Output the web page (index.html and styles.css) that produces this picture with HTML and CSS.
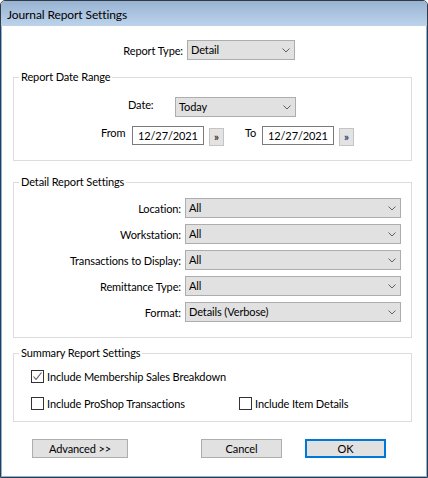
FILE: index.html
```html
<!DOCTYPE html>
<html>
<head>
<meta charset="utf-8">
<title>Journal Report Settings</title>
<link rel="stylesheet" href="styles.css">
</head>
<body>
<div class="window">
  <div class="titlebar"><span class="title">Journal Report Settings</span></div>
  <div class="client">
    <div class="type-row">
      <span class="type-label">Report Type:</span>
      <div class="combo combo-type"><span class="combo-text">Detail</span><svg class="chev" width="8" height="5" viewBox="0 0 8 5"><polyline points="0.5,0.5 4,4 7.5,0.5"/></svg></div>
    </div>

    <fieldset class="group group-date">
      <legend>Report Date Range</legend>
      <div class="date-row">
        <span class="date-label">Date:</span>
        <div class="combo combo-date"><span class="combo-text">Today</span><svg class="chev" width="8" height="5" viewBox="0 0 8 5"><polyline points="0.5,0.5 4,4 7.5,0.5"/></svg></div>
      </div>
      <div class="range-row">
        <span class="from-label">From</span>
        <div class="textbox">12/27/2021</div>
        <div class="pick">&raquo;</div>
        <span class="to-label">To</span>
        <div class="textbox">12/27/2021</div>
        <div class="pick pick-blue">&raquo;</div>
      </div>
    </fieldset>

    <fieldset class="group group-detail">
      <legend>Detail Report Settings</legend>
      <div class="detail-grid">
        <span class="field-label">Location:</span>
        <div class="combo combo-wide"><span class="combo-text">All</span><svg class="chev" width="8" height="5" viewBox="0 0 8 5"><polyline points="0.5,0.5 4,4 7.5,0.5"/></svg></div>
        <span class="field-label">Workstation:</span>
        <div class="combo combo-wide"><span class="combo-text">All</span><svg class="chev" width="8" height="5" viewBox="0 0 8 5"><polyline points="0.5,0.5 4,4 7.5,0.5"/></svg></div>
        <span class="field-label">Transactions to Display:</span>
        <div class="combo combo-wide"><span class="combo-text">All</span><svg class="chev" width="8" height="5" viewBox="0 0 8 5"><polyline points="0.5,0.5 4,4 7.5,0.5"/></svg></div>
        <span class="field-label">Remittance Type:</span>
        <div class="combo combo-wide"><span class="combo-text">All</span><svg class="chev" width="8" height="5" viewBox="0 0 8 5"><polyline points="0.5,0.5 4,4 7.5,0.5"/></svg></div>
        <span class="field-label">Format:</span>
        <div class="combo combo-wide"><span class="combo-text">Details (Verbose)</span><svg class="chev" width="8" height="5" viewBox="0 0 8 5"><polyline points="0.5,0.5 4,4 7.5,0.5"/></svg></div>
      </div>
    </fieldset>

    <fieldset class="group group-summary">
      <legend>Summary Report Settings</legend>
      <div class="check-row first">
        <label class="check"><span class="box"><svg width="11" height="11" viewBox="0 0 11 11"><polyline points="1.5,5.5 4,8.5 9.5,1.5"/></svg></span><span>Include Membership Sales Breakdown</span></label>
      </div>
      <div class="check-row second">
        <label class="check"><span class="box"></span><span>Include ProShop Transactions</span></label>
        <label class="check"><span class="box"></span><span>Include Item Details</span></label>
      </div>
    </fieldset>

    <div class="button-row">
      <div class="btn btn-adv">Advanced &gt;&gt;</div>
      <div class="btn btn-cancel">Cancel</div>
      <div class="btn btn-ok">OK</div>
    </div>
  </div>
</div>
</body>
</html>
```
FILE: styles.css
```css
html, body {
  margin: 0;
  padding: 0;
  background: #ffffff;
}
body {
  font-family: Lato, "Liberation Sans", sans-serif;
  font-size: 11px;
  letter-spacing: -0.12px;
  color: #000;
}
.window {
  width: 428px;
  height: 478px;
  box-sizing: border-box;
  border: 1px solid #333a44;
  border-radius: 5px 5px 0 0;
  overflow: hidden;
  display: flex;
  flex-direction: column;
  background: #fff;
}
.titlebar {
  height: 25px;
  flex: none;
  background: linear-gradient(#98b3d3, #bcd3eb);
  box-sizing: border-box;
  padding: 6px 0 0 6px;
  font-size: 12px;
  line-height: 15px;
  letter-spacing: -0.1px;
}
.client {
  flex: 1;
  border: 1px solid #7fb6e6;
  border-top: none;
  padding: 0 0 0 11px;
  display: flex;
  flex-direction: column;
}

/* combos */
.combo {
  height: 20px;
  box-sizing: border-box;
  background: #e1e1e1;
  border: 1px solid #adadad;
  display: flex;
  align-items: center;
  justify-content: space-between;
  padding: 0 4px 0 3px;
  line-height: 18px;
}
.chev polyline {
  fill: none;
  stroke: #606060;
  stroke-width: 1;
}

/* report type row */
.type-row {
  margin-top: 14px;
  display: flex;
  align-items: center;
  margin-left: -9px;
}
.type-label {
  width: 179px;
  text-align: right;
  margin-right: 4px;
}
.combo-type { width: 108px; }

/* groups */
.group {
  margin: 0;
  padding: 0;
  width: 399px;
  box-sizing: border-box;
  border: 1px solid #dcdcdc;
  min-width: 0;
}
.group legend {
  padding: 0 2px;
  margin-left: 5px;
  line-height: 16px;
  font-size: 11px;
}
.group-date {
  margin-top: 9px;
  height: 92px;
}
.group-detail {
  margin-top: 13px;
  height: 164px;
}
.group-summary {
  margin-top: 7px;
  height: 77px;
}

/* date range */
.date-row {
  margin-top: 12px;
  padding-left: 114px;
  display: flex;
  align-items: flex-start;
}
.date-label {
  width: 47px;
  line-height: 16px;
}
.combo-date { width: 121px; }

.range-row {
  margin-top: 9px;
  padding-left: 87px;
  display: flex;
  align-items: flex-start;
}
.from-label {
  width: 31px;
  line-height: 16px;
  margin-top: -1px;
}
.to-label {
  width: 17px;
  margin-left: 21px;
  line-height: 16px;
  margin-top: -1px;
}
.textbox {
  width: 72px;
  height: 19px;
  box-sizing: border-box;
  border: 1px solid #7a7a7a;
  padding-left: 5px;
  line-height: 17px;
  background: #fff;
}
.pick {
  width: 15px;
  height: 18px;
  margin-top: 2px;
  margin-left: 5px;
  box-sizing: border-box;
  border: 1px solid #c4c4c4;
  background: #e3e3e3;
  font-family: Lato, sans-serif;
  font-size: 11px;
  font-weight: bold;
  line-height: 16px;
  text-align: center;
  color: #3c3020;
}
.pick-blue { color: #243c66; }

/* detail grid */
.detail-grid {
  padding-top: 8px;
  display: grid;
  grid-template-columns: 167px 216px;
  column-gap: 4px;
  row-gap: 6px;
  align-items: center;
}
.field-label {
  text-align: right;
}
.combo-wide { height: 20px; }

/* summary checks */
.check-row {
  padding-left: 17px;
  display: grid;
  grid-template-columns: 208px auto;
}
.check-row.first { margin-top: 9px; }
.check-row.second { margin-top: 14px; }
.check {
  display: flex;
  align-items: center;
  height: 13px;
  line-height: 13px;
}
.box {
  width: 13px;
  height: 13px;
  box-sizing: border-box;
  border: 1px solid #333;
  background: #fff;
  margin-right: 3px;
  display: flex;
  align-items: center;
  justify-content: center;
  flex: none;
}
.box polyline {
  fill: none;
  stroke: #555;
  stroke-width: 1.1;
}

/* buttons */
.button-row {
  margin-top: 17px;
  margin-left: 19px;
  display: flex;
}
.btn {
  height: 19px;
  box-sizing: border-box;
  border: 1px solid #adadad;
  background: #e1e1e1;
  text-align: center;
  line-height: 17px;
}
.btn-adv { width: 96px; }
.btn-cancel { width: 81px; margin-left: 73px; }
.btn-ok {
  width: 81px;
  margin-left: 23px;
  border: 2px solid #0078d7;
  line-height: 15px;
}
```
